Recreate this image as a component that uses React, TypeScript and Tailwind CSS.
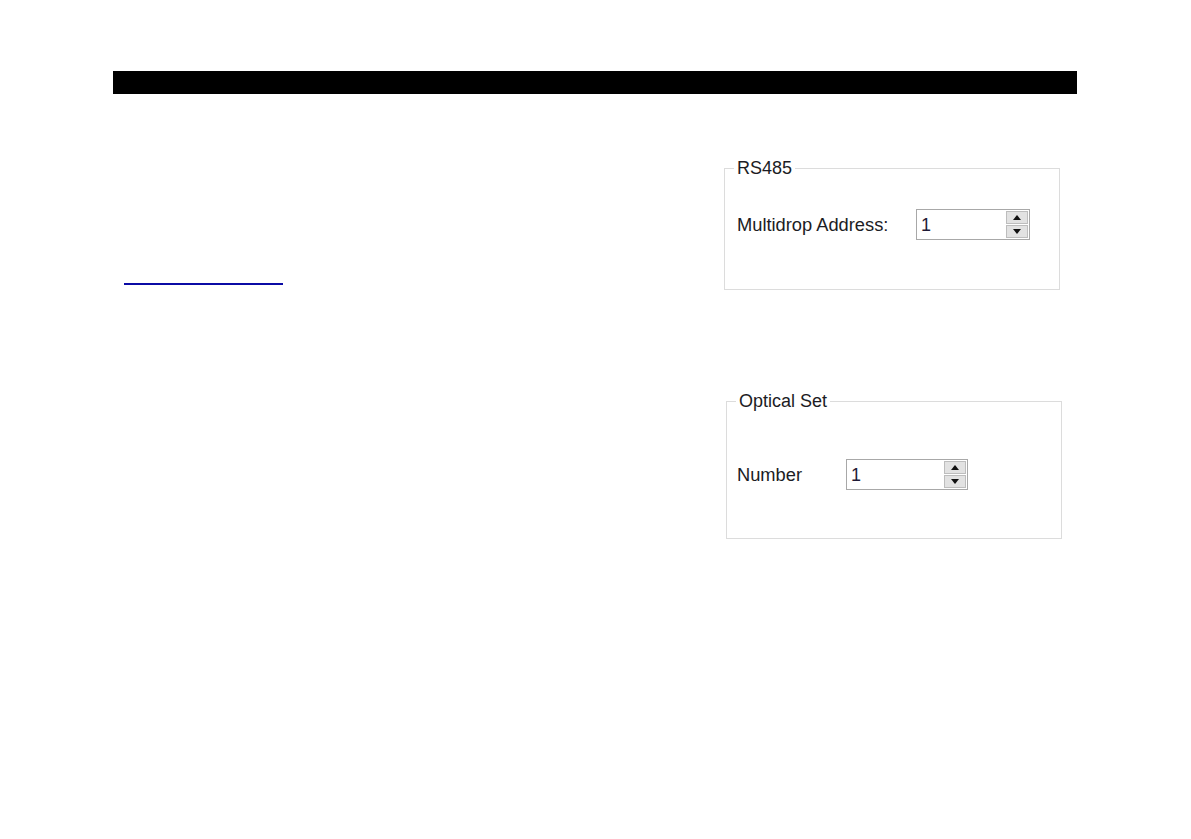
import React from "react";

const font = { fontFamily: '"Liberation Sans", Arial, sans-serif' };

const Spinner: React.FC = () => (
  <div className="flex flex-col w-[22px] h-[27px] mr-[1px] gap-[1px]">
    <div className="flex-1 flex items-center justify-center bg-[#e2e2e2] border border-[#bdbdbd]">
      <svg width="8" height="5" viewBox="0 0 8 5">
        <path d="M0 5 L4 0 L8 5 Z" fill="#111" />
      </svg>
    </div>
    <div className="flex-1 flex items-center justify-center bg-[#e2e2e2] border border-[#bdbdbd]">
      <svg width="8" height="5" viewBox="0 0 8 5">
        <path d="M0 0 L8 0 L4 5 Z" fill="#111" />
      </svg>
    </div>
  </div>
);

interface SpinBoxProps {
  value: string;
  width: string;
}

const SpinBox: React.FC<SpinBoxProps> = ({ value, width }) => (
  <div className={`flex items-center justify-between h-[31px] border border-[#a8a8a8] bg-white ${width}`}>
    <span className="pl-[4px] text-[18px] leading-none text-[#1e1a36]">{value}</span>
    <Spinner />
  </div>
);

const App: React.FC = () => {
  return (
    <div className="min-h-screen bg-white text-[#1c1c24]" style={font}>
      <div className="pt-[71px] pl-[113px]">
        <div className="w-[964px] h-[23px] bg-black" />

        <div className="flex">
          <div className="w-[611px] pt-[189px]">
            <div className="ml-[11px] w-[159px] h-[2px] bg-[#0b0ba5]" />
          </div>

          <div className="flex flex-col pt-[64px]">
            <fieldset className="w-[336px] border border-[#dcdcdc] pt-[31px] pb-[49px]">
              <legend className="ml-[9px] px-[3px] text-[18px] leading-[20px]">RS485</legend>
              <div className="flex items-center pl-[12px] text-[18.3px]">
                <span className="w-[179px] leading-[20px]">Multidrop Address:</span>
                <SpinBox value="1" width="w-[114px]" />
              </div>
            </fieldset>

            <fieldset className="ml-[2px] mt-[101px] w-[336px] border border-[#dcdcdc] pt-[48px] pb-[48px]">
              <legend className="ml-[9px] px-[3px] text-[18px] leading-[20px]">Optical Set</legend>
              <div className="flex items-center pl-[10px] text-[18.3px]">
                <span className="w-[109px] leading-[20px]">Number</span>
                <SpinBox value="1" width="w-[122px]" />
              </div>
            </fieldset>
          </div>
        </div>
      </div>
    </div>
  );
};

export default App;
